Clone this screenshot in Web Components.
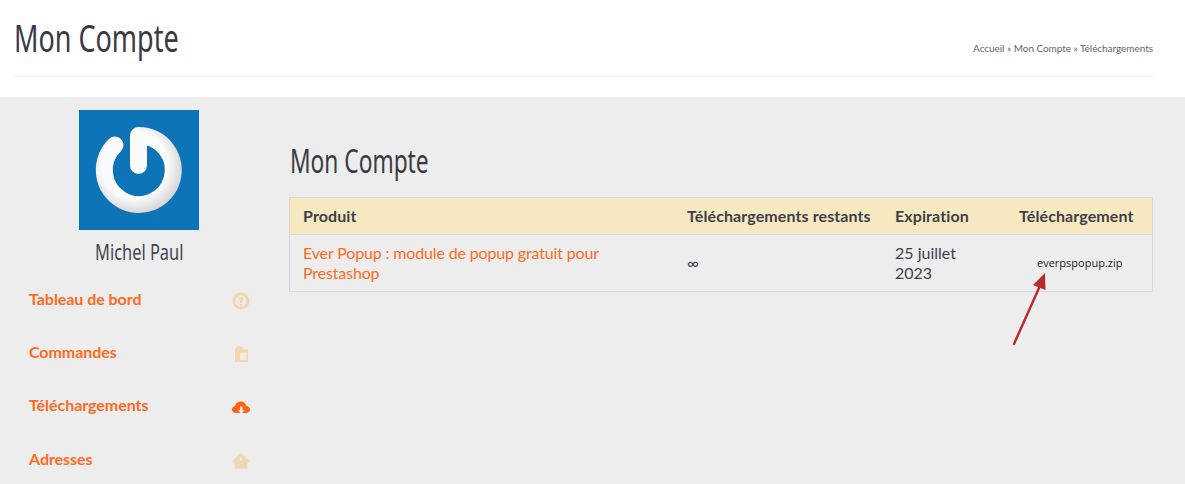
<!DOCTYPE html>
<html lang="fr">
<head>
<meta charset="utf-8">
<title>Mon Compte</title>
<style>
  html, body { margin: 0; padding: 0; height: 100%; overflow: hidden; }
  body { background: #ededed; font-family: Lato, "Liberation Sans", sans-serif; color: #3f3f4b; }
</style>
</head>
<body>
<page-head title="Mon Compte">
  <a>Accueil</a> » <a>Mon Compte</a> » <a>Téléchargements</a>
</page-head>
<account-layout>
  <account-side slot="side" name="Michel Paul">
    <side-link icon="dash">Tableau de bord</side-link>
    <side-link icon="bag">Commandes</side-link>
    <side-link icon="cloud" active>Téléchargements</side-link>
    <side-link icon="home">Adresses</side-link>
  </account-side>
  <downloads-panel title="Mon Compte"></downloads-panel>
</account-layout>

<script>
// no narrow face installed, so the titles are Noto Sans squeezed with scaleX
const TITLE_FONT = '"Noto Sans", "Liberation Sans", sans-serif';

class PageHead extends HTMLElement {
    connectedCallback() {
        this.attachShadow({ mode: 'open' });
        this.shadowRoot.innerHTML = `
        <style>
            :host { display: block; background: #fff; height: 97px; padding: 0 32px 0 14px; box-sizing: border-box; }
            .in { height: 77px; box-sizing: border-box; border-bottom: 1px solid #eee; display: flex; justify-content: space-between; align-items: flex-start; }
            h1 { margin: 11px 0 0; font: 400 38px/52px ${TITLE_FONT}; color: #3a3a44; transform: scaleX(.71); transform-origin: left; white-space: nowrap; }
            nav { margin-top: 41px; font: 400 10px/14px Lato, sans-serif; letter-spacing: -.05px; color: #666; }
        </style>
        <div class="in"><h1>${this.getAttribute('title')}</h1><nav><slot></slot></nav></div>`;
    }
}
customElements.define('page-head', PageHead);

class AccountLayout extends HTMLElement {
    connectedCallback() {
        this.attachShadow({ mode: 'open' });
        this.shadowRoot.innerHTML = `
        <style>
            :host { display: grid; grid-template-columns: 289px 864px; }
        </style>
        <slot name="side"></slot>
        <slot></slot>`;
    }
}
customElements.define('account-layout', AccountLayout);

class AccountSide extends HTMLElement {
    connectedCallback() {
        this.attachShadow({ mode: 'open' });
        this.shadowRoot.innerHTML = `
        <style>
            :host { display: block; padding-top: 13px; }
            .who { width: 278px; display: flex; flex-direction: column; align-items: center; }
            svg { display: block; }
            .name { margin-top: 7px; font: 400 22px/28px ${TITLE_FONT}; color: #44444f; transform: scaleX(.745); white-space: nowrap; }
            .links { margin-top: 7px; width: 278px; }
        </style>
        <div class="who">
            <svg width="120" height="120" viewBox="0 0 120 120">
                <defs>
                    <radialGradient id="ring" gradientUnits="userSpaceOnUse" cx="55" cy="55" r="49">
                        <stop offset="0.68" stop-color="#fbfbfb"/>
                        <stop offset="1" stop-color="#d6d6d6"/>
                    </radialGradient>
                </defs>
                <rect width="120" height="120" fill="#0e74b8"/>
                <path d="M36 35 A34.500 34.500 0 1 0 60 25.500 L59.500 25.500 L59.500 55.500" fill="none" stroke="url(#ring)" stroke-width="17" stroke-linecap="round" stroke-linejoin="round"/>
            </svg>
            <div class="name">${this.getAttribute('name')}</div>
        </div>
        <div class="links"><slot></slot></div>`;
    }
}
customElements.define('account-side', AccountSide);

const ICONS = {
    dash: '<circle cx="9" cy="9" r="7" fill="none" stroke="currentColor" stroke-width="3"/><path d="M6.500 5h5L10 11H8z" fill="currentColor"/><circle cx="9" cy="13" r="1.300" fill="currentColor"/>',
    bag: '<path d="M3 6C3 2.500 5 1 7 1s4 1.200 4.500 3.500H16V17H3z" fill="currentColor"/><rect x="8" y="7.500" width="6.500" height="7.500" fill="#f7ecdd"/>',
    cloud: '<path d="M4 15C1.800 15 0 13.500 0 11.500S1.500 8.500 3 8C3.500 5 6.500 3 9.500 3.500c2.500.3 4.300 2 4.700 4.200 2 .3 3.800 1.800 3.800 3.800S16 15 14 15z" fill="currentColor"/><path d="M8 8.500h2.500V12h2L9.200 16 6 12h2z" fill="#ededed"/>',
    home: '<path d="M9 1 18 9.500H15.500V16.500H2.500V9.500H0z" fill="currentColor"/><rect x="8" y="5.500" width="2" height="3.500" fill="#f7ecdd"/>'
};

class SideLink extends HTMLElement {
    connectedCallback() {
        this.attachShadow({ mode: 'open' });
        const on = this.hasAttribute('active');
        this.shadowRoot.innerHTML = `
        <style>
            :host { display: flex; align-items: center; justify-content: space-between; height: 53.33px; padding: 0 28px 0 29px; font: 700 16px/20px Lato, sans-serif; letter-spacing: -.05px; color: #ff6a22; }
            svg { display: block; color: ${on ? '#ff6310' : '#f2d6b0'}; margin-top: 4px; }
        </style>
        <span><slot></slot></span>
        <svg width="18" height="18" viewBox="0 0 18 18">${ICONS[this.getAttribute('icon')]}</svg>`;
    }
}
customElements.define('side-link', SideLink);

class DownloadsPanel extends HTMLElement {
    connectedCallback() {
        this.attachShadow({ mode: 'open' });
        this.shadowRoot.innerHTML = `
        <style>
            :host { display: block; position: relative; }
            h2 { margin: 0 0 0 1px; height: 100px; box-sizing: border-box; padding-top: 42px; font: 400 32px/44px ${TITLE_FONT}; color: #3a3a44; transform: scaleX(.71); transform-origin: left; white-space: nowrap; }
            table { width: 864px; table-layout: fixed; border-collapse: separate; border-spacing: 0; border: 1px solid #d8d8e0; font: 400 16px/20px Lato, sans-serif; color: #3f3f4b; }
            th { background: #f6e9c0; height: 37px; padding: 0 13px; box-sizing: border-box; text-align: left; font-weight: 700; letter-spacing: .1px; white-space: nowrap; border-bottom: 1px solid #d8d8e0; }
            td { height: 56px; padding: 0 13px; box-sizing: border-box; vertical-align: middle; }
            td a { color: #ff6a22; letter-spacing: -.15px; }
            td.file { font: 400 11px/14px "Open Sans", sans-serif; color: #222; padding-left: 31px; padding-right: 0; padding-bottom: 1px; white-space: nowrap; }
            svg { position: absolute; left: 0; top: 0; overflow: visible; pointer-events: none; }
        </style>
        <h2>${this.getAttribute('title')}</h2>
        <table>
            <colgroup><col style="width:384px"><col style="width:208px"><col style="width:124px"><col></colgroup>
            <thead><tr><th>Produit</th><th>Téléchargements restants</th><th>Expiration</th><th>Téléchargement</th></tr></thead>
            <tbody><tr>
                <td><a>Ever Popup : module de popup gratuit pour Prestashop</a></td>
                <td>∞</td>
                <td>25 juillet 2023</td>
                <td class="file">everpspopup.zip</td>
            </tr></tbody>
        </table>
        <svg width="864" height="260" viewBox="289 97 864 260">
            <path d="M1014 344 L1039 288" stroke="#b92a2a" stroke-width="2.400" stroke-linecap="round"/>
            <path d="M1045 273 L1045.500 290 L1033 285 Z" fill="#b92a2a"/>
        </svg>`;
    }
}
customElements.define('downloads-panel', DownloadsPanel);
</script>
</body>
</html>
